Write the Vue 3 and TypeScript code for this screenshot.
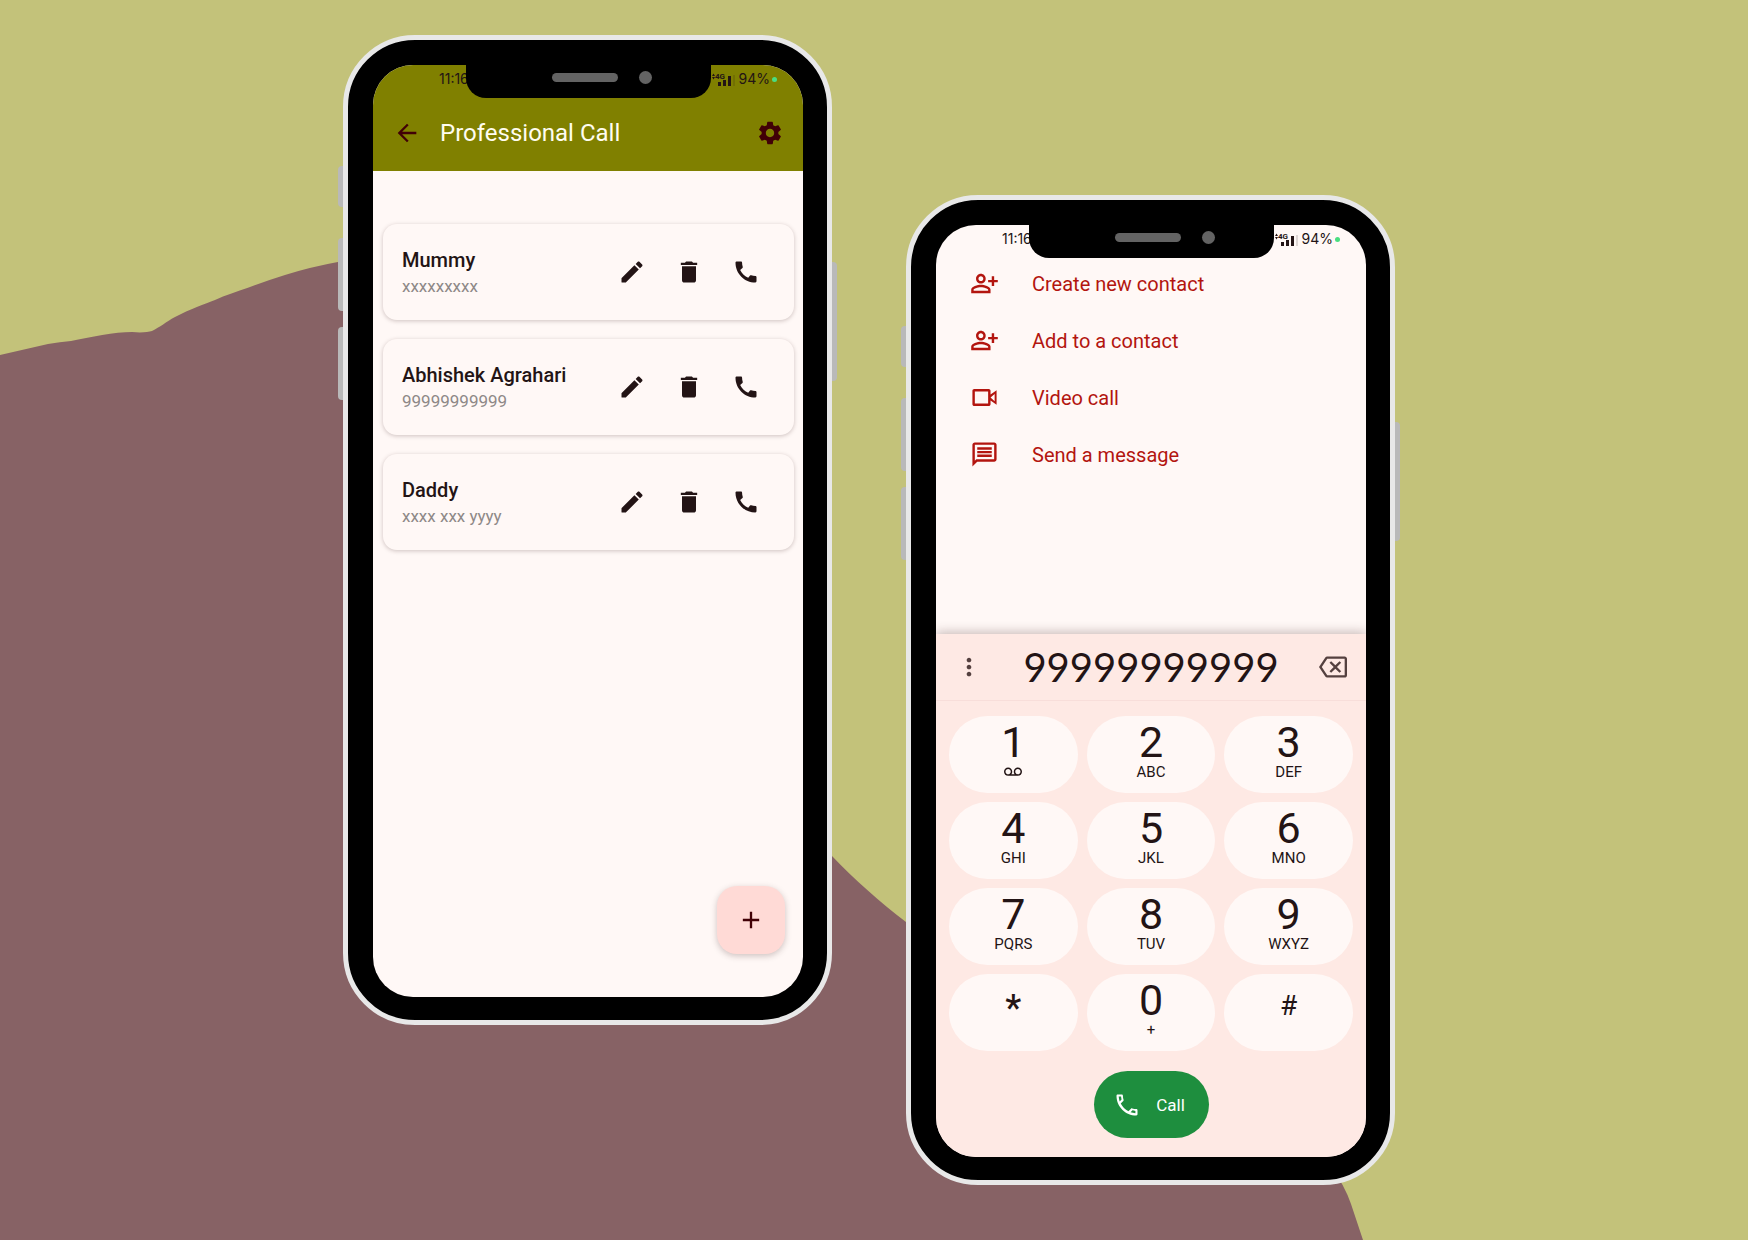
<script setup lang="ts">
interface Contact {
  name: string
  phone: string
}
interface Key {
  digit: string
  letters: string
  kind?: 'voicemail' | 'star' | 'hash' | 'zero'
}
interface MenuEntry {
  label: string
  icon: keyof typeof icons
}

const icons = {
  back: 'M20 11H7.83l5.59-5.59L12 4l-8 8 8 8 1.41-1.41L7.83 13H20v-2z',
  gear: 'M19.14 12.94c.04-.3.06-.61.06-.94 0-.32-.02-.64-.07-.94l2.03-1.58c.18-.14.23-.41.12-.61l-1.92-3.32c-.12-.22-.37-.29-.59-.22l-2.39.96c-.5-.38-1.03-.7-1.62-.94l-.36-2.54c-.04-.24-.24-.41-.48-.41h-3.84c-.24 0-.43.17-.47.41l-.36 2.54c-.59.24-1.13.57-1.62.94l-2.39-.96c-.22-.08-.47 0-.59.22L2.74 8.87c-.12.21-.08.47.12.61l2.03 1.58c-.05.3-.09.63-.09.94s.02.64.07.94l-2.03 1.58c-.18.14-.23.41-.12.61l1.92 3.32c.12.22.37.29.59.22l2.39-.96c.5.38 1.03.7 1.62.94l.36 2.54c.05.24.24.41.48.41h3.84c.24 0 .44-.17.47-.41l.36-2.54c.59-.24 1.13-.56 1.62-.94l2.39.96c.22.08.47 0 .59-.22l1.92-3.32c.12-.22.07-.47-.12-.61l-2.01-1.58zM12 15.6c-1.98 0-3.6-1.62-3.6-3.6s1.62-3.6 3.6-3.6 3.6 1.62 3.6 3.6-1.62 3.6-3.6 3.6z',
  edit: 'M3 17.46v3.04c0 .28.22.5.5.5h3.04c.13 0 .26-.05.35-.15L17.81 9.94l-3.75-3.75L3.15 17.1c-.1.1-.15.22-.15.36zM20.71 7.04c.39-.39.39-1.02 0-1.41l-2.34-2.34c-.39-.39-1.02-.39-1.41 0l-1.83 1.83 3.75 3.75 1.83-1.83z',
  trash: 'M6 19c0 1.1.9 2 2 2h8c1.1 0 2-.9 2-2V7H6v12zM19 4h-3.5l-1-1h-5l-1 1H5v2h14V4z',
  phone: 'M20.01 15.38c-1.23 0-2.42-.2-3.53-.56-.35-.12-.74-.03-1.01.24l-1.57 1.97c-2.83-1.35-5.48-3.9-6.89-6.83l1.95-1.66c.27-.28.35-.67.24-1.02-.37-1.11-.56-2.3-.56-3.53 0-.54-.45-.99-.99-.99H4.19C3.65 3 3 3.24 3 3.99 3 13.28 10.73 21 20.01 21c.71 0 .99-.63.99-1.18v-3.45c0-.54-.45-.99-.99-.99z',
  phoneOutline: 'M4.900 4.800h2c.1 1 .250 1.800.450 2.500L5.700 8.950C5.250 7.600 5 6.300 4.900 4.800zM16.700 16.600c.8.250 1.600.4 2.500.450v2c-1.500-.1-2.850-.4-4.150-.8zM7.500 3H4c-.55 0-1 .45-1 1 0 9.390 7.610 17 17 17 .55 0 1-.45 1-1v-3.490c0-.55-.45-1-1-1-1.240 0-2.450-.2-3.570-.570-.1-.040-.210-.050-.310-.050-.260 0-.510.1-.710.290l-2.200 2.200c-2.830-1.450-5.150-3.760-6.590-6.590l2.200-2.200c.280-.280.360-.670.250-1.020C8.700 6.450 8.500 5.250 8.500 4c0-.55-.45-1-1-1z',
  plus: 'M19 13h-6v6h-2v-6H5v-2h6V5h2v6h6v2z',
  personAdd: 'M9 12c2.21 0 4-1.79 4-4s-1.79-4-4-4-4 1.79-4 4 1.79 4 4 4zm0-6c1.1 0 2 .9 2 2s-.9 2-2 2-2-.9-2-2 .9-2 2-2zM9 13c-2.67 0-8 1.34-8 4v3h16v-3c0-2.66-5.33-4-8-4zm6 5H3v-1c0-.71 3.25-2 6-2s6 1.29 6 2v1zM20 9V6h-2v3h-3v2h3v3h2v-3h3V9z',
  video: 'M3.500 5C2.700 5 2 5.700 2 6.500v11c0 .8.7 1.500 1.500 1.500h12c.8 0 1.500-.7 1.500-1.500v-3l5 3.500V6l-5 3.500v-3c0-.8-.7-1.500-1.500-1.500zM4 7h11v10H4zM20.400 9v6L17 12z',
  message: 'M20 2H4c-1.100 0-2 .9-2 2v18l4-4h14c1.100 0 2-.9 2-2V4c0-1.100-.9-2-2-2zm0 14H5.170L4 17.170V4h16v12zM6 6h12v2H6zM6 9h12v2H6zM6 12h12v2H6z',
  more: 'M12 8c1.100 0 2-.9 2-2s-.9-2-2-2-2 .9-2 2 .9 2 2 2zm0 2c-1.100 0-2 .9-2 2s.9 2 2 2 2-.9 2-2-.9-2-2-2zm0 6c-1.100 0-2 .9-2 2s.9 2 2 2 2-.9 2-2-.9-2-2-2z',
  backspace: 'M22 3H7c-.69 0-1.230.350-1.590.88L0 12l5.410 8.110c.36.530.9.890 1.590.890h15c1.100 0 2-.9 2-2V5c0-1.100-.9-2-2-2zm0 16H7.070L2.400 12l4.660-7H22v14zm-11.590-2L14 13.410 17.590 17 19 15.590 15.410 12 19 8.410 17.590 7 14 10.590 10.410 7 9 8.410 12.590 12 9 15.590z',
  voicemail: 'M18.500 6C15.460 6 13 8.460 13 11.500c0 1.330.47 2.550 1.260 3.500H9.740c.79-.95 1.260-2.170 1.260-3.500C11 8.460 8.540 6 5.500 6S0 8.460 0 11.500 2.460 17 5.500 17h13c3.040 0 5.500-2.460 5.500-5.500S21.540 6 18.500 6zm-13 9C3.570 15 2 13.430 2 11.500S3.570 8 5.500 8 9 9.570 9 11.500 7.430 15 5.500 15zm13 0c-1.930 0-3.500-1.570-3.500-3.500S16.570 8 18.500 8 22 9.570 22 11.500 20.430 15 18.500 15z',
}

const contacts: Contact[] = [
  { name: 'Mummy', phone: 'xxxxxxxxx' },
  { name: 'Abhishek Agrahari', phone: '99999999999' },
  { name: 'Daddy', phone: 'xxxx xxx yyyy' },
]

const menu: MenuEntry[] = [
  { label: 'Create new contact', icon: 'personAdd' },
  { label: 'Add to a contact', icon: 'personAdd' },
  { label: 'Video call', icon: 'video' },
  { label: 'Send a message', icon: 'message' },
]

const keys: Key[] = [
  { digit: '1', letters: '', kind: 'voicemail' },
  { digit: '2', letters: 'ABC' },
  { digit: '3', letters: 'DEF' },
  { digit: '4', letters: 'GHI' },
  { digit: '5', letters: 'JKL' },
  { digit: '6', letters: 'MNO' },
  { digit: '7', letters: 'PQRS' },
  { digit: '8', letters: 'TUV' },
  { digit: '9', letters: 'WXYZ' },
  { digit: '*', letters: '', kind: 'star' },
  { digit: '0', letters: '+', kind: 'zero' },
  { digit: '#', letters: '', kind: 'hash' },
]

const phones = ['contacts', 'dialer'] as const
</script>

<template>
  <main class="stage">
    <svg class="hills" viewBox="0 0 1748 1240" preserveAspectRatio="none" aria-hidden="true">
      <path
        d="M0 355 L48 344 Q60 342 71 341 C90 337 115 332 132 332 C142 333 148 332 152 331 C160 327 166 322 175 317 C190 309 205 304 215 300 Q219 298 223 296.500 C245 289 265 281 285 275 Q310 267 343 261 L500 400 L780 800 C800 825 817 840 832 856 C855 880 880 902 906 922 L1100 1100 L1330 1165 Q1345 1186 1351 1204 L1363 1240 L0 1240 Z"
      />
    </svg>

    <section v-for="phone in phones" :key="phone" class="phone" :class="phone">
      <i class="side mute"></i>
      <i class="side up"></i>
      <i class="side down"></i>
      <i class="side power"></i>
      <div class="screen">
        <div class="notch"><i class="speaker"></i><i class="camera"></i></div>
        <div class="status">
          <span>11:16</span>
          <span class="status-right">
            <svg class="signal" viewBox="0 0 24 16" aria-hidden="true">
              <path d="M1 5l1.500-2.500L4 5zM1 6h3L2.500 8.500z" />
              <text x="4" y="8">4G</text>
              <path d="M7 11h3v4H7zM12 9h3v6h-3zM17 5h3v10h-3z" />
              <path class="faint" d="M22 4h2v11h-2z" />
            </svg>
            <span class="percent">94%</span>
            <i class="dot"></i>
          </span>
        </div>

        <template v-if="phone === 'contacts'">
          <header class="appbar">
            <button class="icon-button" aria-label="Back">
              <svg viewBox="0 0 24 24"><path :d="icons.back" /></svg>
            </button>
            <h1>Professional Call</h1>
            <button class="icon-button" aria-label="Settings">
              <svg viewBox="0 0 24 24"><path :d="icons.gear" /></svg>
            </button>
          </header>
          <ul class="cards">
            <li v-for="c in contacts" :key="c.name" class="card">
              <div class="who">
                <h2>{{ c.name }}</h2>
                <p>{{ c.phone }}</p>
              </div>
              <button class="icon-button" :aria-label="'Edit ' + c.name">
                <svg viewBox="0 0 24 24"><path :d="icons.edit" /></svg>
              </button>
              <button class="icon-button" :aria-label="'Delete ' + c.name">
                <svg viewBox="0 0 24 24"><path :d="icons.trash" /></svg>
              </button>
              <button class="icon-button" :aria-label="'Call ' + c.name">
                <svg viewBox="0 0 24 24"><path :d="icons.phone" /></svg>
              </button>
            </li>
          </ul>
          <button class="fab" aria-label="Add contact">
            <svg viewBox="0 0 24 24"><path :d="icons.plus" /></svg>
          </button>
        </template>

        <template v-else>
          <nav class="menu">
            <button v-for="m in menu" :key="m.label" class="entry">
              <svg viewBox="0 0 24 24"><path :d="icons[m.icon]" fill-rule="evenodd" /></svg>
              <span>{{ m.label }}</span>
            </button>
          </nav>
          <div class="dialpad">
            <div class="number">
              <button class="icon-button" aria-label="More options">
                <svg viewBox="0 0 24 24"><path :d="icons.more" /></svg>
              </button>
              <output>99999999999</output>
              <button class="icon-button" aria-label="Backspace">
                <svg viewBox="0 0 24 24"><path :d="icons.backspace" /></svg>
              </button>
            </div>
            <div class="keys">
              <button v-for="k in keys" :key="k.digit" class="key" :class="k.kind">
                <span class="digit">{{ k.digit }}</span>
                <svg v-if="k.kind === 'voicemail'" viewBox="0 0 24 24"><path :d="icons.voicemail" /></svg>
                <span v-else-if="k.letters" class="letters">{{ k.letters }}</span>
              </button>
            </div>
            <button class="call">
              <svg viewBox="0 0 24 24"><path :d="icons.phoneOutline" fill-rule="evenodd" /></svg>
              <span>Call</span>
            </button>
          </div>
        </template>
      </div>
    </section>
  </main>
</template>

<style>
body {
  margin: 0;
}
</style>

<style scoped>
* {
  box-sizing: border-box;
}

button {
  border: 0;
  padding: 0;
  background: none;
  color: inherit;
  font: inherit;
}

svg {
  display: block;
  fill: currentColor;
}

.stage {
  position: relative;
  display: flex;
  justify-content: center;
  align-items: flex-start;
  gap: 74px;
  min-height: 100vh;
  padding: 35px 10px 35px 0;
  background: #c3c27a;
  overflow: hidden;
  font-family: Roboto, "Liberation Sans", sans-serif;
  color: #231415;
}

.hills {
  position: absolute;
  inset: 0;
  width: 100%;
  height: 100%;
  fill: #876265;
}

.phone {
  position: relative;
  display: flex;
  flex: 0 1 489px;
  min-height: 990px;
  padding: 25px 24px 23px 25px;
  border: 5px solid #e8e8e8;
  border-radius: 72px;
  background: #000;
}

.dialer {
  margin-top: 160px;
}

.side {
  position: absolute;
  left: -10px;
  width: 5px;
  border-radius: 4px 0 0 4px;
  background: #b9b9b9;
}

.mute {
  top: 126px;
  height: 41px;
}

.up {
  top: 198px;
  height: 73px;
}

.down {
  top: 287px;
  height: 73px;
}

.power {
  top: 222px;
  right: -10px;
  left: auto;
  height: 119px;
  border-radius: 0 4px 4px 0;
}

.screen {
  position: relative;
  display: flex;
  flex: 1;
  flex-direction: column;
  border-radius: 40px;
  background: #fff8f6;
  overflow: hidden;
}

.notch {
  position: absolute;
  top: 0;
  left: 50%;
  display: flex;
  align-items: center;
  justify-content: flex-end;
  gap: 21px;
  width: 245px;
  height: 33px;
  margin-left: -122px;
  padding: 0 59px 9px 0;
  border-radius: 0 0 20px 20px;
  background: #000;
}

.speaker {
  width: 66px;
  height: 9px;
  border-radius: 5px;
  background: #636363;
}

.camera {
  width: 13px;
  height: 13px;
  border-radius: 50%;
  background: #636363;
}

.status {
  display: flex;
  justify-content: space-between;
  height: 28px;
  padding: 0 26px 0 66px;
  font: 14px/28px Inter, Roboto, sans-serif;
}

.status-right {
  display: flex;
  align-items: center;
}

.percent {
  margin: 0 2px 0 4px;
}

.signal {
  width: 24px;
  height: 16px;
}

.signal text {
  font: 700 8px Roboto, sans-serif;
}

.faint {
  opacity: 0.15;
}

.dot {
  width: 5px;
  height: 5px;
  border-radius: 50%;
  background: #4ade80;
}

.contacts .status {
  background: #808000;
}

.appbar {
  display: flex;
  align-items: center;
  height: 78px;
  padding: 2px 19px 0 20px;
  background: #808000;
  color: #410006;
}

.appbar h1 {
  flex: 1;
  margin: 0 0 0 19px;
  color: #fffdf0;
  font-size: 24px;
  font-weight: 400;
  line-height: 32px;
}

.icon-button svg {
  width: 28px;
  height: 28px;
}

.cards {
  display: flex;
  flex-direction: column;
  gap: 19px;
  margin: 0;
  padding: 53px 9px 0 10px;
  list-style: none;
}

.card {
  display: flex;
  align-items: center;
  gap: 29px;
  height: 96px;
  padding: 0 34px 0 19px;
  border-radius: 14px;
  box-shadow: 0 1px 4px rgba(60, 30, 30, 0.25);
  background: #fff8f6;
}

.who {
  flex: 1;
}

.who h2 {
  margin: 0;
  padding-top: 2px;
  font-size: 20px;
  font-weight: 500;
  line-height: 26px;
}

.who p {
  margin: 0;
  color: #8e8887;
  font-size: 17px;
  line-height: 26px;
}

.fab {
  display: flex;
  align-items: center;
  justify-content: center;
  align-self: flex-end;
  width: 68px;
  height: 68px;
  margin: auto 18px 43px 0;
  border-radius: 20px;
  box-shadow: 0 2px 6px rgba(60, 30, 30, 0.25);
  background: #ffdad6;
  color: #410006;
}

.fab svg {
  width: 28px;
  height: 28px;
}

.menu {
  display: flex;
  flex-direction: column;
  padding-top: 2px;
}

.entry {
  display: flex;
  align-items: center;
  gap: 33px;
  height: 57px;
  padding: 0 34px;
  color: #b3150f;
  font-size: 20px;
  text-align: left;
}

.entry svg {
  width: 29px;
  height: 29px;
}

.dialpad {
  display: flex;
  flex-direction: column;
  margin-top: auto;
  padding-bottom: 19px;
  box-shadow: 0 -2px 10px rgba(60, 30, 30, 0.28);
  background: #fee9e4;
}

.number {
  display: flex;
  align-items: center;
  justify-content: space-between;
  height: 67px;
  padding: 0 19px;
  border-bottom: 1px solid #f8deda;
  color: #54403f;
}

.number output {
  color: #231415;
  font-family: Lato, Roboto, sans-serif;
  font-size: 40px;
  line-height: 48px;
}

.keys {
  display: grid;
  grid-template-columns: repeat(3, 1fr);
  gap: 9px;
  padding: 15px 13px 20px;
}

.key {
  display: flex;
  flex-direction: column;
  align-items: center;
  height: 77px;
  padding-top: 6px;
  border-radius: 39px;
  background: #fff8f6;
}

.digit {
  font-size: 43px;
  line-height: 40px;
}

.letters {
  font-size: 15px;
  line-height: 20px;
}

.key svg {
  width: 18px;
  height: 20px;
}

.star .digit {
  padding-top: 8px;
  font-size: 36px;
  font-weight: 500;
}

.hash .digit {
  padding-top: 6px;
  font-size: 28px;
}

.call {
  display: flex;
  align-items: center;
  align-self: center;
  justify-content: center;
  gap: 15px;
  width: 115px;
  height: 67px;
  padding-right: 4px;
  border-radius: 34px;
  background: #1e8e3e;
  color: #fff;
  font-size: 17px;
}

.call svg {
  width: 28px;
  height: 28px;
}
</style>
